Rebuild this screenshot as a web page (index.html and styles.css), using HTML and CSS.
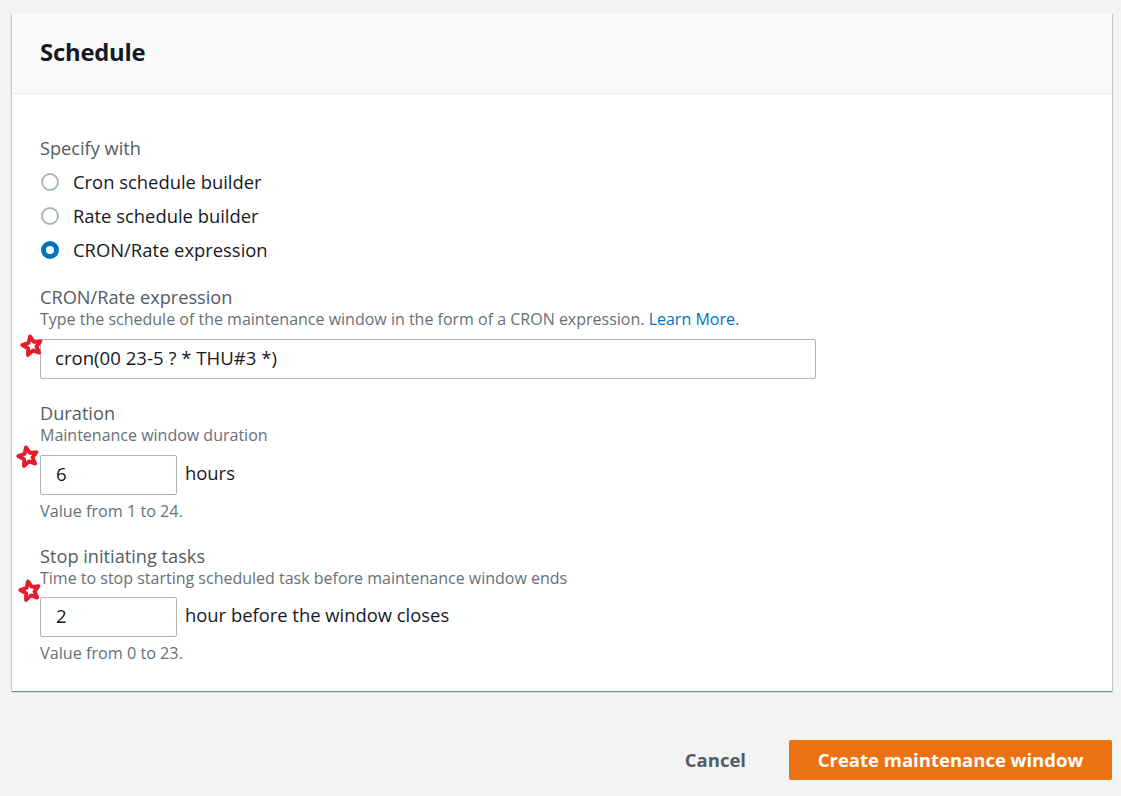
FILE: index.html
```html
<!DOCTYPE html>
<html>
<head>
<meta charset="utf-8">
<link rel="stylesheet" href="styles.css">
</head>
<body>
<div class="page">
  <section class="card">
    <header class="card-header"><h2 class="title">Schedule</h2></header>
    <div class="card-body">
      <div class="group">
        <div class="label">Specify with</div>
        <label class="radio-row"><span class="radio"></span><span class="radio-text">Cron schedule builder</span></label>
        <label class="radio-row"><span class="radio"></span><span class="radio-text">Rate schedule builder</span></label>
        <label class="radio-row"><span class="radio checked"></span><span class="radio-text">CRON/Rate expression</span></label>
      </div>

      <div class="field first">
        <div class="label">CRON/Rate expression</div>
        <div class="desc">Type the schedule of the maintenance window in the form of a CRON expression. <a class="link">Learn More.</a></div>
        <div class="control">
          <svg class="star s1" viewBox="0 0 24 24"><path d="M12 3 L14.47 8.6 L20.56 9.22 L15.99 13.3 L17.29 19.28 L12 16.2 L6.71 19.28 L8.01 13.3 L3.44 9.22 L9.53 8.6 Z" fill="none" stroke="#e51d2a" stroke-width="3.6" stroke-linejoin="round"/></svg>
          <div class="input wide">cron(00 23-5 ? * THU#3 *)</div>
        </div>
      </div>

      <div class="field">
        <div class="label">Duration</div>
        <div class="desc">Maintenance window duration</div>
        <div class="control">
          <svg class="star s2" viewBox="0 0 24 24"><path d="M12 3 L14.47 8.6 L20.56 9.22 L15.99 13.3 L17.29 19.28 L12 16.2 L6.71 19.28 L8.01 13.3 L3.44 9.22 L9.53 8.6 Z" fill="none" stroke="#e51d2a" stroke-width="3.6" stroke-linejoin="round"/></svg>
          <div class="input small">6</div>
          <span class="unit">hours</span>
        </div>
        <div class="constraint">Value from 1 to 24.</div>
      </div>

      <div class="field">
        <div class="label">Stop initiating tasks</div>
        <div class="desc">Time to stop starting scheduled task before maintenance window ends</div>
        <div class="control">
          <svg class="star s3" viewBox="0 0 24 24"><path d="M12 3 L14.47 8.6 L20.56 9.22 L15.99 13.3 L17.29 19.28 L12 16.2 L6.71 19.28 L8.01 13.3 L3.44 9.22 L9.53 8.6 Z" fill="none" stroke="#e51d2a" stroke-width="3.6" stroke-linejoin="round"/></svg>
          <div class="input small">2</div>
          <span class="unit">hour before the window closes</span>
        </div>
        <div class="constraint">Value from 0 to 23.</div>
      </div>
    </div>
  </section>

  <div class="actions">
    <button class="btn-link">Cancel</button>
    <button class="btn-primary">Create maintenance window</button>
  </div>
</div>
</body>
</html>
```

FILE: styles.css
```css
* { box-sizing: border-box; }
html, body { margin: 0; padding: 0; }
body {
  background: #f2f3f3;
  font-family: "Open Sans", "Noto Sans", sans-serif;
  color: #16191f;
}
.page {
  width: 1100px;
  margin-left: 12px;
  padding-top: 13px;
}
.card {
  background: #fff;
  box-shadow: 0 1px 1px 0 rgba(0,28,36,.3), 1px 1px 1px 0 rgba(0,28,36,.15), -1px 1px 1px 0 rgba(0,28,36,.15);
}
.card-header {
  height: 81px;
  background: #fafafa;
  border-bottom: 1px solid #eaeded;
  display: flex;
  align-items: center;
  padding: 0 28px;
}
.title {
  margin: 0;
  font-size: 23.8px;
  font-weight: 700;
  color: #16191f;
  letter-spacing: -0.2px;
  padding-bottom: 2px;
}
.card-body {
  padding: 43px 28px 27px;
}
.label {
  font-size: 18.2px;
  line-height: 22px;
  color: #545b64;
}
.radio-row {
  display: flex;
  align-items: center;
  height: 22px;
  margin-top: 12px;
  gap: 14px;
}
.radio {
  width: 18px;
  height: 18px;
  margin-left: 1px;
  border-radius: 50%;
  border: 2px solid #aab7b8;
  background: #fff;
}
.radio.checked {
  border: 5px solid #0073bb;
}
.radio-text {
  font-size: 18.4px;
  line-height: 20px;
  color: #16191f;
}
.field { margin-top: 23px; }
.field.first { margin-top: 25px; }
.desc {
  font-size: 16px;
  line-height: 22px;
  color: #687078;
}
.link { color: #0073bb; }
.control {
  position: relative;
  display: flex;
  align-items: center;
  gap: 8px;
  margin-top: 9px;
}
.field:last-child .control { margin-top: 8px; }
.input {
  height: 40px;
  border: 1px solid #aab7b8;
  border-radius: 2px;
  background: #fff;
  font-size: 18.6px;
  line-height: 36px;
  padding: 0 14px;
  color: #16191f;
}
.input.wide { width: 776px; }
.input.small { width: 137px; padding-left: 15px; }
.unit {
  font-size: 18.4px;
  line-height: 36px;
  padding-bottom: 4px;
  color: #16191f;
}
.constraint {
  font-size: 16.2px;
  line-height: 22px;
  color: #687078;
  margin-top: 5px;
}
.star {
  position: absolute;
  width: 26px;
  height: 26px;
  transform: rotate(-12deg);
}
.s1 { left: -21px; top: -6px; }
.s2 { left: -25px; top: -11px; }
.s3 { left: -23px; top: -19px; }
.actions {
  display: flex;
  justify-content: flex-end;
  align-items: center;
  margin-top: 49px;
  gap: 43px;
}
.btn-link {
  border: 0;
  background: none;
  font-family: inherit;
  font-size: 18.5px;
  font-weight: 700;
  color: #545b64;
  padding: 0 0 2px;
}
.btn-primary {
  height: 40px;
  border: 0;
  border-radius: 2px;
  background: #ec7211;
  color: #fff;
  font-family: inherit;
  font-size: 18.5px;
  font-weight: 700;
  padding: 0 0 2px;
  width: 323px;
}
```
